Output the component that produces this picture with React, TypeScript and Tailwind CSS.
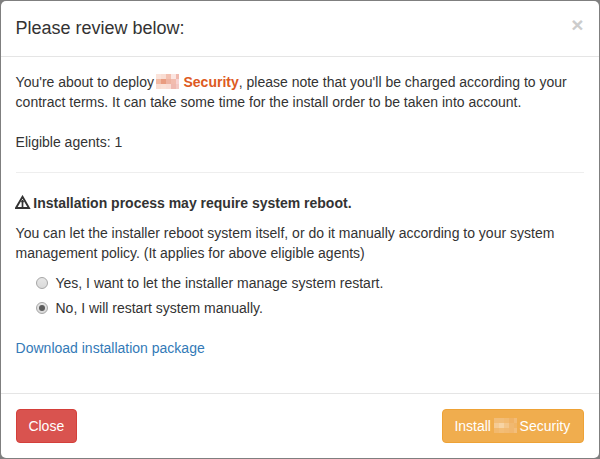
import { useState } from "react";

const deployMosaic = [
  "#fbe3da", "#f9ddd3", "#f3c0b0", "#fbe6e2", "#f0b9ae",
  "#f1b9a3", "#e99c80", "#eeb3a2", "#f2bcae", "#f7d3d3",
  "#f8ddd2", "#fae0d6", "#f9dcd4", "#efb9b0", "#f4c9c4",
];

const buttonMosaic = [
  "#f2bd77", "#f2bd78", "#f2ba70", "#f0b265", "#f2bb76",
  "#f5cb94", "#f7d4a4", "#f4c68a", "#f0b870", "#f1b567",
  "#f2b96e", "#f3bd76", "#f2ba72", "#f1b76f", "#f3be7c",
];

function Mosaic({ colors }: { colors: string[] }) {
  return (
    <svg width="23" height="15" viewBox="0 0 23 15" shapeRendering="crispEdges" className="block" aria-hidden="true">
      {colors.map((color, i) => (
        <rect key={i} x={(i % 5) * 5} y={Math.floor(i / 5) * 5} width="5" height="5" fill={color} />
      ))}
    </svg>
  );
}

function WarningIcon() {
  return (
    <svg width="16" height="15" viewBox="0 0 16 15" className="block" aria-hidden="true">
      <path d="M7.5 1.8 L14 13 H1 Z" fill="none" stroke="#333" strokeWidth="1.9" />
      <path d="M7.5 5 V12.5" stroke="#333" strokeWidth="1.7" />
      <path d="M6 6.7 H9" stroke="#333" strokeWidth="1" />
    </svg>
  );
}

function Radio({ label, checked, onSelect }: { label: string; checked: boolean; onSelect: () => void }) {
  return (
    <label className="flex h-5 items-center" onClick={onSelect}>
      <span className="mr-[7.5px] flex size-3 shrink-0 items-center justify-center rounded-full border border-[#a6a6a6] bg-linear-to-b from-[#e6e6e6] to-[#dadada]">
        {checked && <span className="size-1.5 rounded-full bg-[#5c5c5c]" />}
      </span>
      {label}
    </label>
  );
}

export default function App() {
  const [manual, setManual] = useState(true);
  return (
    <div className="h-[459px] w-[600px] overflow-hidden bg-[#7f7f7f] p-px font-['Liberation_Sans',Arial,sans-serif] text-sm leading-5 text-[#333]">
      <div className="flex h-[457px] flex-col rounded-[5px] bg-white">
        <header className="flex h-14 shrink-0 justify-between border-b border-[#e5e5e5] pt-[15px] pr-[15.5px] pl-[14.5px]">
          <h4 className="text-[18px] leading-6">Please review below:</h4>
          <button className="-mt-[2px] h-[21px] text-[21px] leading-[21px] font-bold text-[#ccc]">×</button>
        </header>

        <main className="flex h-[336px] shrink-0 flex-col pt-[15px] pr-[15px] pl-[14.6px]">
          <div className="flex whitespace-pre">
            <span>You're about to deploy</span>
            <span className="mt-[2px] mr-[4.5px] ml-[2px]"><Mosaic colors={deployMosaic} /></span>
            <strong className="text-[#dd5a22]">Security</strong>
            <span>, please note that you'll be charged according to your</span>
          </div>
          <p>contract terms. It can take some time for the install order to be taken into account.</p>
          <p className="mt-5">Eligible agents: 1</p>
          <hr className="mt-5 ml-[0.4px] border-[#eee]" />
          <p className="mt-5 flex font-bold">
            <span className="mt-[2px] mr-[2.3px] -ml-[0.6px]"><WarningIcon /></span>
            Installation process may require system reboot.
          </p>
          <p className="mt-[10px]">
            You can let the installer reboot system itself, or do it manually according to your system
            <br />
            management policy. (It applies for above eligible agents)
          </p>
          <div className="mt-[10px] ml-[0.4px] flex flex-col gap-[5px] pl-5">
            <Radio label="Yes, I want to let the installer manage system restart." checked={!manual} onSelect={() => setManual(false)} />
            <Radio label="No, I will restart system manually." checked={manual} onSelect={() => setManual(true)} />
          </div>
          <a className="mt-5 text-[#337ab7]">Download installation package</a>
        </main>

        <footer className="flex justify-between border-t border-[#e5e5e5] p-[15px] text-white">
          <button className="h-[34px] w-[61px] rounded-sm border border-[#d43f3a] bg-[#d9534f] pl-[11.4px] text-left">Close</button>
          <button className="flex h-[34px] w-[142px] rounded-sm border border-[#eea236] bg-[#f0ad4e] pt-[6px] pl-[11.4px]">
            Install
            <span className="mt-[2px] mr-[3px] ml-[2.6px]"><Mosaic colors={buttonMosaic} /></span>
            Security
          </button>
        </footer>
      </div>
    </div>
  );
}
